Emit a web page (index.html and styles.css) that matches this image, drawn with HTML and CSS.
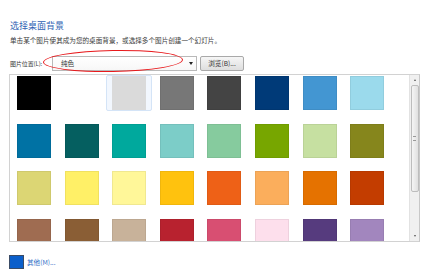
FILE: index.html
```html
<!DOCTYPE html>
<html lang="zh-CN">
<head>
    <meta charset="UTF-8">
    <title>选择桌面背景</title>
    <link rel="stylesheet" href="styles.css">
</head>
<body>
    <div class="page">
        <h1 class="title">选择桌面背景</h1>
        <p class="desc">单击某个图片使其成为您的桌面背景，或选择多个图片创建一个幻灯片。</p>

        <div class="location">
            <span class="location-label">图片位置(L):</span>
            <div class="select">
                <span class="select-text">纯色</span>
                <span class="select-arrow"></span>
                <div class="mark"></div>
            </div>
            <button class="browse">浏览(B)...</button>
        </div>

        <div class="gallery">
            <div class="swatches">
                <!-- row 1 -->
                <div class="swatch" style="background:#000000"></div>
                <div class="swatch blank"></div>
                <div class="swatch selected" style="background:#dadada"></div>
                <div class="swatch" style="background:#777777"></div>
                <div class="swatch" style="background:#444444"></div>
                <div class="swatch" style="background:#003a78"></div>
                <div class="swatch" style="background:#4396d2"></div>
                <div class="swatch" style="background:#9bdaec"></div>
                <!-- row 2 -->
                <div class="swatch" style="background:#0072a4"></div>
                <div class="swatch" style="background:#055f60"></div>
                <div class="swatch" style="background:#00a99d"></div>
                <div class="swatch" style="background:#7ccdc8"></div>
                <div class="swatch" style="background:#86cb9e"></div>
                <div class="swatch" style="background:#77a600"></div>
                <div class="swatch" style="background:#c6e0a1"></div>
                <div class="swatch" style="background:#86861c"></div>
                <!-- row 3 -->
                <div class="swatch" style="background:#dcd674"></div>
                <div class="swatch" style="background:#fff067"></div>
                <div class="swatch" style="background:#fff799"></div>
                <div class="swatch" style="background:#ffc20e"></div>
                <div class="swatch" style="background:#ee6117"></div>
                <div class="swatch" style="background:#fbae5c"></div>
                <div class="swatch" style="background:#e57200"></div>
                <div class="swatch" style="background:#c33d00"></div>
                <!-- row 4 -->
                <div class="swatch" style="background:#9f6c51"></div>
                <div class="swatch" style="background:#8a5e35"></div>
                <div class="swatch" style="background:#c8b29a"></div>
                <div class="swatch" style="background:#b8222f"></div>
                <div class="swatch" style="background:#d84f72"></div>
                <div class="swatch" style="background:#fddfec"></div>
                <div class="swatch" style="background:#563b7e"></div>
                <div class="swatch" style="background:#a286be"></div>
            </div>
            <div class="scrollbar">
                <span class="arrow up"></span>
                <div class="thumb"><span class="grip"></span></div>
                <span class="arrow down"></span>
            </div>
        </div>

        <div class="other">
            <span class="other-icon"></span>
            <span class="other-text">其他(M)...</span>
        </div>
    </div>
</body>
</html>
```

FILE: styles.css
```css
* {
    margin: 0;
    padding: 0;
    box-sizing: border-box;
}

body {
    background: #ffffff;
    color: #333333;
    font-family: "Noto Sans CJK SC", "Noto Sans", sans-serif;
}

.page {
    padding: 20px 0 0 10px;
    width: 447px;
    height: 271px;
    overflow: hidden;
}

.title {
    font-size: 9px;
    font-weight: normal;
    line-height: 11px;
    color: #2f5fb3;
}

.desc {
    margin-top: 5px;
    font-size: 6.6px;
    line-height: 9px;
    color: #3a3a3a;
}

.location {
    display: flex;
    align-items: center;
    margin-top: 10px;
    height: 16px;
}

.location-label {
    flex-shrink: 0;
    width: 42px;
    font-size: 6px;
    letter-spacing: -0.1px;
    white-space: nowrap;
    color: #3a3a3a;
}

.select {
    position: relative;
    flex-shrink: 0;
    display: flex;
    align-items: center;
    width: 145px;
    height: 15px;
    border: 1px solid #b9b9b9;
    background: linear-gradient(#ffffff, #f7f7f7);
    padding-left: 8px;
}

.select-text {
    font-size: 6.6px;
    color: #333333;
    flex: 1;
}

.select-arrow {
    width: 0;
    height: 0;
    margin-right: 3px;
    border-left: 2px solid transparent;
    border-right: 2px solid transparent;
    border-top: 3px solid #222222;
}

.mark {
    position: absolute;
    left: -10px;
    top: -7px;
    width: 140px;
    height: 22px;
    border: 1.5px solid #e8191c;
    border-radius: 50%;
    transform: rotate(-1deg);
}

.browse {
    flex-shrink: 0;
    margin-left: 3px;
    width: 44px;
    height: 15px;
    border: 1px solid #a9a9a9;
    border-radius: 2px;
    background: linear-gradient(#f6f6f6, #dedede);
    font-family: inherit;
    font-size: 6.6px;
    color: #333333;
}

.gallery {
    display: flex;
    margin-top: 3px;
    margin-left: -1px;
    width: 411px;
    height: 168px;
    border: 1px solid #d2d2d2;
    border-right-color: #c8c8c8;
    overflow: hidden;
}

.swatches {
    flex: 1;
    display: grid;
    grid-template-columns: repeat(8, 34px);
    grid-auto-rows: 34px;
    column-gap: 13.6px;
    row-gap: 13.5px;
    padding: 1px 0 0 7px;
}

.swatch {
    border: 1px solid rgba(0, 0, 0, 0.06);
}

.swatch.blank {
    background: #ffffff;
    border-color: transparent;
}

.swatch.selected {
    position: relative;
    border-color: #dadada;
}

.swatch.selected::before {
    content: "";
    position: absolute;
    left: -7px;
    right: -7px;
    top: -2px;
    bottom: -2px;
    border: 1px solid #d4e4f7;
    border-radius: 2px;
    background: #f2f7fe;
    z-index: -1;
}

.scrollbar {
    display: flex;
    flex-direction: column;
    align-items: center;
    width: 10px;
    background: #f0f0f0;
    border-left: 1px solid #e2e2e2;
}

.arrow {
    width: 0;
    height: 0;
    border-left: 1.5px solid transparent;
    border-right: 1.5px solid transparent;
}

.arrow.up {
    margin-top: 4px;
    border-bottom: 2px solid #555555;
}

.arrow.down {
    margin-top: auto;
    margin-bottom: 4px;
    border-top: 2px solid #555555;
}

.thumb {
    display: flex;
    align-items: center;
    justify-content: center;
    margin-top: 4px;
    width: 8px;
    height: 107px;
    border: 1px solid #bdbdbd;
    border-radius: 2px;
    background: linear-gradient(90deg, #f5f5f5, #e0e0e0);
}

.grip {
    width: 3px;
    height: 5px;
    border-top: 1px solid #999999;
    border-bottom: 1px solid #999999;
}

.other {
    display: flex;
    align-items: center;
    gap: 3px;
    margin-top: 13px;
    margin-left: -1px;
}

.other-icon {
    width: 15px;
    height: 14px;
    background: #0b5fcb;
    border: 1px solid #3b4c66;
}

.other-text {
    font-size: 6.6px;
    color: #2f6fc7;
}
```
